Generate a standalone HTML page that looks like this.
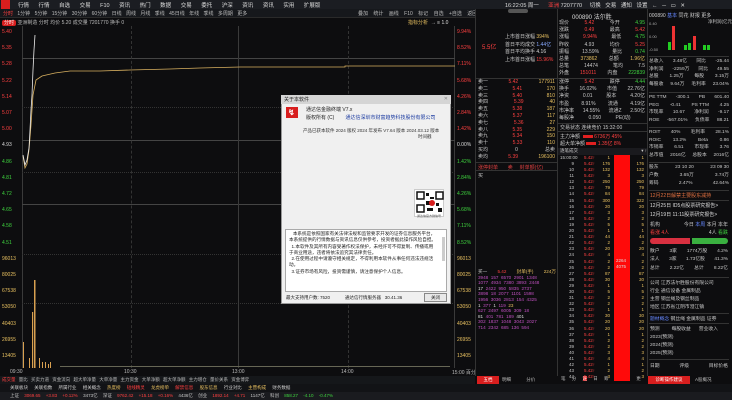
<!DOCTYPE html>
<html><head><meta charset="utf-8"><style>
*{margin:0;padding:0;box-sizing:border-box}
body{width:732px;height:400px;background:#0d0d0f;overflow:hidden;position:relative;font-family:"Liberation Sans","Noto Sans CJK SC",sans-serif;font-size:6px;color:#c8c8c8}
.a{position:absolute;white-space:nowrap}
.r{color:#ff4040}.g{color:#3fd43f}.y{color:#e8c060}.w{color:#ddd}.p{color:#c050c0}
.row{display:flex;justify-content:space-between}
</style></head><body>
<!-- top menu -->
<div class="a" style="left:0;top:0;width:732px;height:9px;background:#1b1d22"></div>
<div class="a" style="left:1px;top:0;width:9px;height:9px;background:#d81e1e"></div>
<div class="a w" style="left:18px;top:1px;font-size:5.5px;word-spacing:8px">行情 行情 自选 交易 F10 资讯 热门 数据 交易 委托 沪深 资讯 资讯 实用 扩展版</div>
<div class="a w" style="left:505px;top:1px;font-size:5.5px">16:22:05 周一 &nbsp;&nbsp;&nbsp;&nbsp; <span class="r">亚洲</span> 7207770 &nbsp;&nbsp;&nbsp; 切换 &nbsp; 交易 &nbsp; 通知 &nbsp; 设置 &nbsp; ← &nbsp; ─ &nbsp; ▭ &nbsp; ✕</div>
<div class="a" style="left:0;top:9px;width:475px;height:9px;background:#16181c;border-bottom:1px solid #2a2a2a"></div>
<div class="a" style="left:3px;top:10px;font-size:5px;color:#bbb;word-spacing:3px"><span class="r">分时</span> 1分钟 5分钟 15分钟 30分钟 60分钟 日线 周线 月线 季线 45日线 年线 季线 多周期 更多</div>
<div class="a" style="left:358px;top:10px;font-size:5px;color:#bbb;word-spacing:4px">叠加 统计 画线 F10 标记 自选 +自选 返回</div>
<div class="a" style="left:2px;top:19px;font-size:5px;color:#bbb"><span style="background:#d81e1e;color:#fff;padding:0 2px;border-radius:2px">分时</span> 亚洲制造 分时 均价 5.20 成交量 7201770 换手 0</div>
<div class="a y" style="left:408px;top:19px;font-size:5px">指标分析 &nbsp;<span class="w">→ ≡ 1.0</span></div>
<!-- chart area -->
<div class="a" style="left:22px;top:26px;width:433px;height:342px;border-left:1px solid #3a3a3a;border-right:1px solid #3a3a3a"></div>
<div class="a" style="left:22px;top:58px;width:433px;border-top:1px solid #444"></div>
<div class="a" style="left:22px;top:107px;width:433px;border-top:1px dotted #333"></div>
<div class="a" style="left:22px;top:140px;width:433px;border-top:1px solid #444"></div>
<div class="a" style="left:22px;top:172px;width:433px;border-top:1px dotted #333"></div>
<div class="a" style="left:22px;top:204px;width:433px;border-top:1px solid #444"></div>
<div class="a" style="left:22px;top:254px;width:433px;border-top:1px dotted #333"></div>
<div class="a" style="left:22px;top:303px;width:433px;border-top:1px dotted #333"></div>
<div class="a" style="left:131px;top:26px;height:342px;border-left:1px dashed #333"></div>
<div class="a" style="left:238px;top:26px;height:342px;border-left:1px solid #3a3a3a"></div>
<div class="a" style="left:348px;top:26px;height:342px;border-left:1px dashed #333"></div>
<svg class="a" style="left:0;top:0" width="475" height="370">
<polyline fill="none" stroke="#d8b060" stroke-width="0.8" points="23,156 25,168 27,164 29,150 31,125 33,95 36,80 42,76 55,73 70,71 100,71 130,70 170,69 200,68 240,67 345,67 345,66 455,66"/>
<polyline fill="none" stroke="#eee" stroke-width="0.8" points="23,155 25,165 27,160 29,148 30,130 31,110 32,95 33,70 34,50 35,35"/>
<g fill="#d8a050">
<rect x="23" y="342" width="1" height="26"/><rect x="29" y="358" width="1" height="10"/><rect x="32" y="312" width="1.2" height="56"/><rect x="34" y="280" width="1.5" height="88"/><rect x="39" y="358" width="1" height="10"/><rect x="42" y="362" width="1" height="6"/><rect x="45" y="362" width="1" height="6"/><rect x="48" y="364" width="1" height="4"/><rect x="50" y="362" width="1" height="6"/>
</g>
<rect x="60" y="366" width="390" height="1" fill="#665"/>
</svg>
<div class="a" style="left:2px;top:24px;line-height:16.2px;font-size:5px">
<div class="r">5.40</div><div class="r">5.35</div><div class="r">5.28</div><div class="r">5.22</div><div class="r">5.14</div><div class="r">5.07</div><div class="r">5.00</div><div class="w">4.93</div><div class="g">4.86</div><div class="g">4.81</div><div class="g">4.72</div><div class="g">4.65</div><div class="g">4.58</div><div class="g">4.51</div><div class="y">96013</div><div class="y">80025</div><div class="y">67538</div><div class="y">53050</div><div class="y">40403</div><div class="y">26955</div><div class="y">13405</div>
</div>
<div class="a" style="left:457px;top:24px;line-height:16.2px;font-size:5px">
<div class="r">9.94%</div><div class="r">8.52%</div><div class="r">7.11%</div><div class="r">5.68%</div><div class="r">4.26%</div><div class="r">2.84%</div><div class="r">1.42%</div><div class="w">0.00%</div><div class="g">1.42%</div><div class="g">2.84%</div><div class="g">4.26%</div><div class="g">5.68%</div><div class="g">7.11%</div><div class="g">8.52%</div><div class="y">96013</div><div class="y">80025</div><div class="y">67538</div><div class="y">53050</div><div class="y">40403</div><div class="y">26955</div><div class="y">13405</div>
</div>
<div class="a" style="left:10px;top:369px;width:465px;font-size:5px;color:#bbb">
<span class="a" style="left:0">09:30</span><span class="a" style="left:114px">10:30</span><span class="a" style="left:222px">13:00</span><span class="a" style="left:331px">14:00</span><span class="a" style="left:442px">15:00 百分</span></div>
<!-- bottom bars -->
<div class="a" style="left:0;top:376px;width:475px;height:8px;background:#15171a;font-size:4.5px;color:#bbb;padding-left:2px;line-height:8px;word-spacing:2px"><span class="r">成交量</span> 量比 买卖力道 资金流向 超大单净量 大单净量 主力资金 大单净额 超大单净额 主力增仓 量价关系 资金博弈</div>
<div class="a" style="left:0;top:384px;width:732px;height:8px;background:#121316;font-size:4.5px;line-height:8px;padding-left:10px;word-spacing:5px;color:#ccc">关联板块 关联指数 所属行业 相关概念 <span class="y">热度榜</span> <span class="r">短线精灵</span> <span class="y">龙虎榜单</span> <span class="r">解禁信息</span> <span class="y">股东信息</span> 行业对比 <span class="y">主营构成</span> 财务数据</div>
<div class="a" style="left:0;top:392px;width:732px;height:8px;background:#1a1b1f;font-size:4.5px;line-height:8px;padding-left:10px;word-spacing:4px">上证 <span class="r">3069.65 +3.83 +0.12%</span> 3473亿 深证 <span class="r">9762.42 +15.18 +0.16%</span> 4436亿 创业 <span class="r">1892.14 +4.71</span> 1147亿 科创 <span class="g">858.27 -4.10 -0.47%</span></div>
<!-- dialog -->
<div class="a" style="left:281px;top:95px;width:170px;height:209px;background:#f0f0f0;border:1px solid #999"></div>
<div class="a" style="left:281px;top:95px;width:170px;height:9px;background:#d5d5d5;font-size:5px;color:#222;padding:1px 3px">关于本软件<span style="float:right;color:#888">✕</span></div>
<div class="a" style="left:286px;top:107px;width:12px;height:11px;background:#d81e1e"></div>
<div class="a" style="left:288px;top:108px;color:#fff;font-size:8px;font-weight:bold">↯</div>
<div class="a" style="left:306px;top:106px;font-size:5px;color:#222">通达信金融终端 V7.x</div>
<div class="a" style="left:306px;top:114px;font-size:5px;color:#222">版权所有 (C) &nbsp;&nbsp;&nbsp;&nbsp;&nbsp;&nbsp;&nbsp;<span style="color:#1a3aa0">通达信深圳市财富趋势科技股份有限公司</span></div>
<div class="a" style="left:303px;top:128px;font-size:4.5px;color:#333">产品已获本软件 2024 版权 2024 年发布 V7.64 版本 2024.03.12 版本<br><span style="margin-left:115px">时间戳</span></div>
<div class="a" style="left:414px;top:189px;width:30px;height:28px;background:#fff;border:1px solid #ccc">
<svg width="28" height="22" style="margin:1px"><rect x="1" y="1" width="7" height="7" fill="none" stroke="#111" stroke-width="1.5"/><rect x="20" y="1" width="7" height="7" fill="none" stroke="#111" stroke-width="1.5"/><rect x="1" y="14" width="7" height="7" fill="none" stroke="#111" stroke-width="1.5"/><rect x="10" y="2" width="3" height="3" fill="#111"/><rect x="14" y="6" width="4" height="2" fill="#111"/><rect x="10" y="10" width="4" height="4" fill="#111"/><rect x="20" y="12" width="3" height="3" fill="#111"/><rect x="11" y="17" width="6" height="3" fill="#111"/><circle cx="16" cy="12" r="3" fill="#d81e1e"/><rect x="22" y="17" width="4" height="4" fill="#111"/></svg>
<div style="font-size:3px;color:#555;text-align:center;margin-top:-2px">通达信官方微信号</div></div>
<div class="a" style="left:285px;top:229px;width:162px;height:63px;background:#fff;border:1px solid #aaa;font-size:4.6px;color:#222;line-height:6.3px;padding:1px 10px 0 3px;white-space:normal;overflow:hidden">&nbsp;&nbsp;&nbsp;本系统是依照国家有关法律法规和监管要求开发的证券信息服务平台，本系统提供的行情数据与资讯信息仅供参考，投资者据此操作风险自担。<br>&nbsp;&nbsp;1.本软件及其所有内容受著作权法保护，未经许可不得复制、传播或用于商业用途，违者将依法追究其法律责任。<br>&nbsp;&nbsp;2.在使用过程中请遵守相关规定，不得利用本软件从事任何违法违规活动。<br>&nbsp;&nbsp;3.证券市场有风险，投资需谨慎，请注意保护个人信息。</div>
<div class="a" style="left:442px;top:237px;width:3px;height:24px;background:#ccc"></div>
<div class="a" style="left:286px;top:295px;font-size:4.5px;color:#222">最大支持用户数: 7520 &nbsp;&nbsp;&nbsp;&nbsp;&nbsp;&nbsp;&nbsp;&nbsp;&nbsp;&nbsp;&nbsp;通达信行情服务器 &nbsp; 30.41.36</div>
<div class="a" style="left:424px;top:293px;width:23px;height:9px;background:#e8e8e8;border:1px solid #888;font-size:4.5px;color:#222;text-align:center;line-height:7px">关闭</div>
<!-- right panel -->
<div class="a" style="left:475px;top:9px;width:257px;height:367px;background:#0d0d0f;border-left:1px solid #333"></div>
<div class="a" style="left:557px;top:9px;height:367px;border-left:1px solid #333"></div>
<div class="a" style="left:647px;top:9px;height:367px;border-left:1px solid #333"></div>
<div class="a" style="left:508px;top:9px;width:20px;height:4px;background:#555;border-radius:2px"></div>
<div class="a" style="left:477px;top:376px;width:22px;height:8px;background:#d81e1e;color:#fff;font-size:4.5px;text-align:center;line-height:8px">五档</div>
<div class="a" style="left:502px;top:377px;font-size:4.5px;color:#bbb;word-spacing:14px">明细 分价</div>
<div class="a" style="left:557px;top:376px;width:90px;height:8px;font-size:4.5px;color:#bbb;word-spacing:5px;padding-left:4px">笔 分 <span style="background:#d81e1e;color:#fff">逐</span> 日 筹 盘 五 更</div>
<div class="a" style="left:648px;top:376px;width:42px;height:8px;background:#d81e1e;color:#fff;font-size:4.5px;line-height:8px;text-align:center">诊断操作建议</div>
<div class="a" style="left:695px;top:377px;font-size:4.5px;color:#bbb">A股概况</div>
<!-- col1 -->
<div class="a r" style="left:482px;top:42px;font-size:6px">5.5亿</div>
<div class="a" style="left:505px;top:34px;font-size:5px;line-height:7.5px;color:#ccc">
<div>上市首日涨幅 <span class="y">394%</span></div><div>首日平均成交 <span style="color:#8af">1.44亿</span></div><div>首日平均换手 <span class="w">4.16</span></div><div>上市首日涨幅 <span class="r">15.96%</span></div></div>
<div class="a" style="left:476px;top:78px;width:81px;border-top:1px solid #333"></div>
<div class="a" style="left:478px;top:79px;width:77px;font-size:5px;line-height:6.8px">
<div class="row"><span>卖一</span><span class="r">5.42</span><span class="y">177911</span></div>
<div class="row"><span>卖二</span><span class="r">5.41</span><span class="y">170</span></div>
<div class="row"><span>卖三</span><span class="r">5.40</span><span class="y">810</span></div>
<div class="row"><span>卖四</span><span class="r">5.39</span><span class="y">40</span></div>
<div class="row"><span>卖五</span><span class="r">5.38</span><span class="y">187</span></div>
<div class="row"><span>卖六</span><span class="r">5.37</span><span class="y">117</span></div>
<div class="row"><span>卖七</span><span class="r">5.36</span><span class="y">27</span></div>
<div class="row"><span>卖八</span><span class="r">5.35</span><span class="y">229</span></div>
<div class="row"><span>卖九</span><span class="r">5.34</span><span class="y">150</span></div>
<div class="row"><span>卖十</span><span class="r">5.33</span><span class="y">110</span></div>
<div class="row"><span>买均</span><span>0</span><span>总卖</span></div>
<div class="row"><span>卖均</span><span class="r">5.39</span><span class="y">196100</span></div>
</div>
<div class="a" style="left:476px;top:162px;width:81px;height:9px;border-top:1px solid #333;border-bottom:1px solid #333;font-size:5px;color:#e04040;padding:1px 2px">涨停封单 &nbsp;&nbsp;&nbsp;&nbsp;&nbsp; 卖 &nbsp;&nbsp;&nbsp; 封单额(亿)</div>
<div class="a" style="left:478px;top:172px;font-size:5px">买</div>
<div class="a" style="left:478px;top:269px;width:78px;font-size:4.6px;line-height:5.6px">
<div class="row"><span>买一</span><span class="r">5.42</span><span class="y">封单(手)</span><span class="y">224万</span></div>
<div class="p">3948 &nbsp;157 &nbsp;6570 &nbsp;2901 &nbsp;1348<br>1077 &nbsp;4934 &nbsp;7380 &nbsp;3893 &nbsp;2448<br><span class="w">17</span> &nbsp;2422 &nbsp;950 &nbsp;5835 &nbsp;2737<br>3898 &nbsp;18 &nbsp;2077 &nbsp;1101 &nbsp;1598<br>1956 &nbsp;3036 &nbsp;2813 &nbsp;154 &nbsp;4325<br><span class="w">1</span> &nbsp;377 &nbsp;<span class="w">1</span> &nbsp;119 &nbsp;<span class="y">23</span><br>627 &nbsp;2497 &nbsp;6005 &nbsp;309 &nbsp;18<br><span class="w">81</span> &nbsp;401 &nbsp;781 &nbsp;189 &nbsp;<span class="w">401</span><br>302 &nbsp;1837 &nbsp;1048 &nbsp;3043 &nbsp;2027<br>714 &nbsp;2342 &nbsp;685 &nbsp;136 &nbsp;594</div></div>
<!-- col2 -->
<div class="a w" style="left:572px;top:12px;font-size:6px">000890 法尔胜</div>
<div class="a" style="left:559px;top:20px;width:86px;font-size:5px;line-height:7.2px">
<div class="row"><span>现价</span><span class="r">5.42</span><span>今开</span><span class="g">4.95</span></div>
<div class="row"><span>涨跌</span><span class="r">0.49</span><span>最高</span><span class="r">5.42</span></div>
<div class="row"><span>涨幅</span><span class="r">9.94%</span><span>最低</span><span class="g">4.75</span></div>
<div class="row"><span>昨收</span><span>4.93</span><span>均价</span><span class="r">5.25</span></div>
<div class="row"><span>振幅</span><span>13.59%</span><span>量比</span><span class="g">0.74</span></div>
<div class="row"><span>总量</span><span class="y">373862</span><span>总额</span><span class="y">1.96亿</span></div>
<div class="row"><span>总笔</span><span>14474</span><span>笔均</span><span>7.5</span></div>
<div class="row"><span>外盘</span><span class="r">151011</span><span>内盘</span><span class="g">222839</span></div>
</div>
<div class="a" style="left:558px;top:78px;width:89px;border-top:1px solid #333"></div>
<div class="a" style="left:559px;top:79px;width:86px;font-size:5px;line-height:7.2px">
<div class="row"><span>涨停</span><span class="r">5.42</span><span>跌停</span><span class="g">4.44</span></div>
<div class="row"><span>换手</span><span>16.02%</span><span>市值</span><span>22.76亿</span></div>
<div class="row"><span>净资</span><span>0.01</span><span>股本</span><span>4.20亿</span></div>
<div class="row"><span>市盈</span><span>8.91%</span><span>流通</span><span>4.19亿</span></div>
<div class="row"><span>市净率</span><span>14.55%</span><span>流通Z</span><span>2.50亿</span></div>
<div class="row"><span>每股净</span><span>0.050</span><span>PE(动)</span><span></span></div>
</div>
<div class="a" style="left:558px;top:123px;width:89px;border-top:1px solid #333"></div>
<div class="a" style="left:560px;top:124px;font-size:5px">交易状态 连续竞价 15:32:00</div>
<div class="a" style="left:558px;top:131px;width:89px;border-top:1px solid #333"></div>
<div class="a" style="left:560px;top:133px;font-size:5px">主力净额 &nbsp;<span style="background:#e02020;display:inline-block;width:10px;height:3px"></span> <span class="r">6736万 45%</span></div>
<div class="a" style="left:560px;top:140px;font-size:5px">超大单净额 <span style="background:#e02020;display:inline-block;width:10px;height:3px"></span> <span class="r">1.35亿 8%</span></div>
<div class="a" style="left:558px;top:148px;width:89px;height:7px;background:#1a1a1e;font-size:4.5px;padding-left:2px">逐笔成交 <span style="float:right">▾ ↑</span></div>
<div class="a" style="left:614px;top:155px;width:16px;height:226px;background:#ff0a0a"></div>
<div class="a w" style="left:616px;top:258px;font-size:4.5px;line-height:6px">2264<br>4075</div>
<div class="a" style="left:560px;top:155px;font-size:4.5px;line-height:6.1px">15:00:00</div>
<div class="a r" style="left:584px;top:155px;font-size:4.5px;line-height:6.1px">5.42↑</div>
<div class="a y" style="left:598px;top:155px;font-size:4.5px;line-height:6.1px;width:12px;text-align:right">1</div>
<div class="a y" style="left:632px;top:155px;font-size:4.5px;line-height:6.1px;width:12px;text-align:right">1</div>
<div class="a" style="left:560px;top:161px;font-size:4.5px;line-height:6.1px;text-align:right;width:14px">9<br>10<br>11<br>12<br>13<br>14<br>15<br>16<br>17<br>18<br>19<br>20<br>21<br>22<br>23<br>24<br>25<br>26<br>27<br>28<br>29<br>30<br>31<br>32<br>33<br>34<br>35<br>36<br>37<br>38<br>39<br>40<br>41<br>42<br>43<br>44</div>
<div class="a r" style="left:584px;top:161px;font-size:4.5px;line-height:6.1px">5.42↑<br>5.42↑<br>5.42↑<br>5.42↑<br>5.42↑<br>5.42↑<br>5.42↑<br>5.42↑<br>5.42↑<br>5.42↑<br>5.42↑<br>5.42↑<br>5.42↑<br>5.42↑<br>5.42↑<br>5.42↑<br>5.42↑<br>5.42↑<br>5.42↑<br>5.42↑<br>5.42↑<br>5.42↑<br>5.42↑<br>5.42↑<br>5.42↑<br>5.42↑<br>5.42↑<br>5.42↑<br>5.42↑<br>5.42↑<br>5.42↑<br>5.42↑<br>5.42↑<br>5.42↑<br>5.42↑<br>5.42↑</div>
<div class="a y" style="left:598px;top:161px;font-size:4.5px;line-height:6.1px;text-align:right;width:12px">176<br>132<br>3<br>250<br>79<br>84<br>300<br>20<br>3<br>2<br>5<br>1<br>44<br>2<br>20<br>4<br>2<br>2<br>87<br>30<br>1<br>5<br>2<br>2<br>1<br>30<br>20<br>20<br>1<br>2<br>2<br>3<br>4<br>1<br>2<br>3</div>
<div class="a y" style="left:632px;top:161px;font-size:4.5px;line-height:6.1px;text-align:right;width:12px">176<br>132<br>3<br>250<br>79<br>84<br>322<br>20<br>3<br>2<br>5<br>1<br>44<br>2<br>20<br>4<br>2<br>2<br>87<br>30<br>1<br>5<br>2<br>2<br>1<br>30<br>20<br>20<br>1<br>2<br>2<br>3<br>4<br>1<br>2<br>3</div>
<!-- col3 -->
<div class="a" style="left:649px;top:12px;font-size:5px;color:#ccc">000890 <span style="color:#68f">基本</span> 同花 财报 更多</div>
<div class="a" style="left:708px;top:19px;font-size:4.5px">净利润(亿元)</div>
<svg class="a" style="left:649px;top:20px" width="80" height="35"><g font-size="4" fill="#aaa"><text x="0" y="5">0.40</text><text x="0" y="18">0.00</text><text x="0" y="31">-0.50</text></g>
<rect x="19" y="22" width="3" height="8" fill="#2c2"/><rect x="23" y="6" width="3" height="24" fill="#e33"/><rect x="35" y="25" width="3" height="5" fill="#2c2"/><rect x="39" y="23" width="3" height="7" fill="#2c2"/><rect x="44" y="16" width="3" height="14" fill="#e33"/><rect x="54" y="25" width="3" height="5" fill="#2c2"/><rect x="58" y="25" width="3" height="5" fill="#2c2"/></svg>
<div class="a" style="left:649px;top:56px;width:80px;border-top:1px solid #333"></div>
<div class="a" style="left:649px;top:58px;width:80px;font-size:4.8px;line-height:7.6px">
<div class="row"><span>总收入</span><span>3.48亿</span><span>同比</span><span>-25.44</span></div>
<div class="row"><span>净利润</span><span>-2259万</span><span>同比</span><span>49.55</span></div>
<div class="row"><span>总股</span><span>1.25万</span><span>每股</span><span>3.15万</span></div>
<div class="row"><span>每股收</span><span>9.64万</span><span>毛利率</span><span>23.04%</span></div>
</div>
<div class="a" style="left:649px;top:92px;width:80px;border-top:1px solid #333"></div>
<div class="a" style="left:649px;top:94px;width:80px;font-size:4.8px;line-height:7.6px">
<div class="row"><span>PE TTM</span><span>-300.1</span><span>PB</span><span>601.40</span></div>
<div class="row"><span>PEG</span><span>-0.41</span><span>PS TTM</span><span>4.25</span></div>
<div class="row"><span>市现率</span><span>10.67</span><span>净利润</span><span>-9.17</span></div>
<div class="row"><span>ROE</span><span>-567.01%</span><span>负债率</span><span>88.21</span></div>
</div>
<div class="a" style="left:649px;top:127px;width:80px;border-top:1px solid #333"></div>
<div class="a" style="left:649px;top:129px;width:80px;font-size:4.8px;line-height:7.6px">
<div class="row"><span>ROIT</span><span>40%</span><span>毛利率</span><span>28.1%</span></div>
<div class="row"><span>ROIC</span><span>13.2%</span><span>Beta</span><span>0.86</span></div>
<div class="row"><span>市销率</span><span>6.51</span><span>市现率</span><span>3.76</span></div>
<div class="row"><span>总市值</span><span>2016亿</span><span>总股本</span><span>2016亿</span></div>
</div>
<div class="a" style="left:649px;top:162px;width:80px;border-top:1px solid #333"></div>
<div class="a" style="left:649px;top:164px;width:80px;font-size:4.8px;line-height:8px">
<div class="row"><span>股东</span><span>23 10 20</span><span>23 09 30</span></div>
<div class="row"><span>户数</span><span>3.65万</span><span>3.74万</span></div>
<div class="row"><span>筹码</span><span>2.47%</span><span>42.64%</span></div>
</div>
<div class="a" style="left:649px;top:190px;width:80px;border-top:1px solid #333"></div>
<div class="a" style="left:650px;top:192px;font-size:5px;color:#e07040">12月22日解禁主要股东减持</div>
<div class="a" style="left:649px;top:200px;width:80px;border-top:1px solid #333"></div>
<div class="a" style="left:650px;top:202px;font-size:5px;color:#ddd;line-height:9px">12月25日 ID5点股票研究报告&gt;<br>12月19日 11:11股票研究报告&gt;</div>
<div class="a" style="left:650px;top:221px;width:78px;font-size:5px;line-height:8px">
<div class="row"><span>机构</span><span>今日 <span style="color:#68f">本周</span> 本月 本年</span></div>
<div class="row"><span class="r">看涨 4人</span><span>4人 <span class="g">看跌</span></span></div></div>
<div class="a" style="left:650px;top:238px;width:40px;height:6px;background:#d83040;border-radius:3px 0 0 3px"></div>
<div class="a" style="left:692px;top:238px;width:36px;height:6px;background:#3ab040;border-radius:0 3px 3px 0"></div>
<div class="a" style="left:650px;top:248px;width:78px;font-size:4.8px;line-height:8.3px">
<div class="row"><span>散户</span><span>3家</span><span>1774万股</span><span>4.2%</span></div>
<div class="row"><span>法人</span><span>3家</span><span>1.73亿股</span><span>41.3%</span></div>
<div class="row"><span>总计</span><span>2.22亿</span><span>总计</span><span>8.22亿</span></div></div>
<div class="a" style="left:649px;top:277px;width:80px;border-top:1px solid #333"></div>
<div class="a" style="left:650px;top:280px;font-size:4.8px;line-height:8px">公司 江苏法尔胜股份有限公司<br>行业 通信设备 金属制品<br>主营 钢丝绳及钢丝制品<br>地区 江苏省江阴市澄江镇</div>
<div class="a" style="left:649px;top:313px;width:80px;border-top:1px solid #333"></div>
<div class="a" style="left:650px;top:315px;font-size:4.8px"><span style="color:#68f">题材概念</span> 钢丝绳 金属制品 证券</div>
<div class="a" style="left:649px;top:323px;width:80px;border-top:1px solid #333"></div>
<div class="a" style="left:650px;top:326px;font-size:4.8px;line-height:8px">预测 &nbsp;&nbsp;&nbsp;&nbsp;&nbsp;&nbsp;&nbsp; 每股收益 &nbsp;&nbsp;&nbsp;&nbsp; 营业收入<br>2023(预测)<br>2024(预测)<br>2025(预测)</div>
<div class="a" style="left:649px;top:359px;width:80px;border-top:1px solid #333"></div>
<div class="a" style="left:650px;top:362px;font-size:4.8px;width:78px"><div class="row"><span>日期</span><span>评级</span><span>目标价格</span></div></div>
</body></html>
